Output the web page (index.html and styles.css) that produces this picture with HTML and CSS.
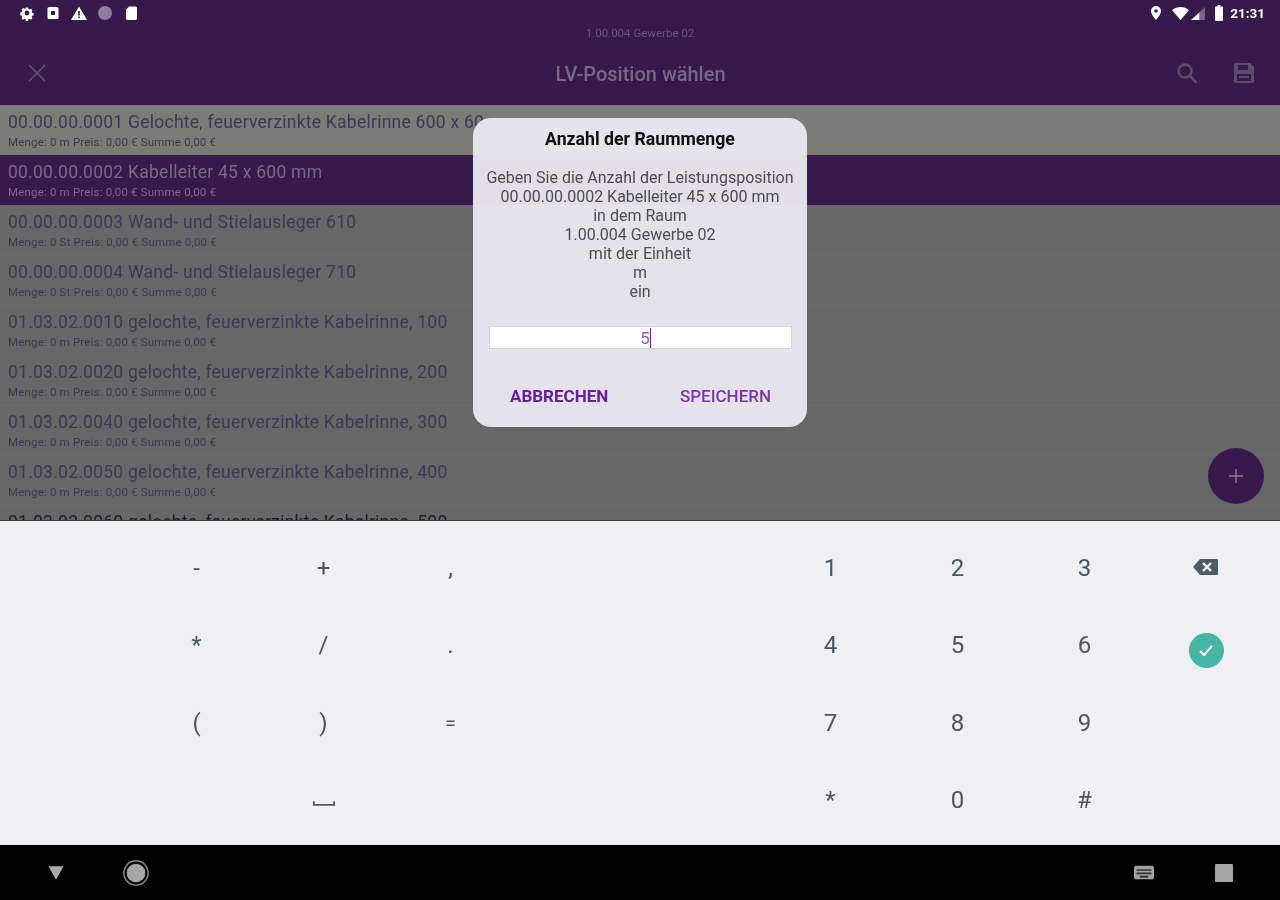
FILE: index.html
```html
<!DOCTYPE html>
<html lang="de">
<head>
<meta charset="utf-8">
<title>LV-Position wählen</title>
<link rel="stylesheet" href="styles.css">
</head>
<body>
<div class="app">
  <header class="header">
    <div class="status">
      <div class="status-left">
        <svg class="si" viewBox="0 0 16 16"><path fill="#fff" d="M6.6 1h2.8l.4 2 1.3.6 1.8-1 2 2-1.1 1.7.6 1.4 2 .4v2.8l-2 .4-.6 1.3 1.1 1.8-2 2-1.8-1.1-1.3.6-.4 2H6.6l-.4-2-1.3-.6-1.8 1.1-2-2 1.1-1.8-.6-1.3-2-.4V7.1l2-.4.6-1.4-1.1-1.7 2-2 1.8 1 1.3-.6z" transform="translate(1.6 1.6) scale(.8)"/><circle cx="8" cy="8" r="2.4" fill="#371a4b"/></svg>
        <svg class="si" viewBox="0 0 16 16"><rect x="2.500" y="2" width="11" height="12" rx="1.500" fill="#fff"/><rect x="6" y="6" width="4" height="4" fill="#371a4b"/></svg>
        <svg class="si" viewBox="0 0 16 16"><path fill="#fff" d="M8 1.500 16 15H0z"/><rect x="7.200" y="6" width="1.600" height="4.500" fill="#371a4b"/><rect x="7.200" y="11.500" width="1.600" height="1.600" fill="#371a4b"/></svg>
        <svg class="si" viewBox="0 0 16 16"><circle cx="8" cy="8" r="7" fill="#8f7ba3"/></svg>
        <svg class="si" viewBox="0 0 16 16"><path fill="#fff" d="M6 1.500h6.500A1.500 1.500 0 0 1 14 3v10.500a1.500 1.500 0 0 1-1.500 1.500h-8A1.500 1.500 0 0 1 3 13.500V4.500z"/></svg>
      </div>
      <div class="status-right">
        <svg class="si" viewBox="0 0 16 16"><path fill="#fff" fill-rule="evenodd" d="M8 1a5 5 0 0 1 5 5c0 3.500-5 9-5 9S3 9.500 3 6a5 5 0 0 1 5-5zm0 3.200a1.800 1.800 0 1 0 0 3.600 1.800 1.800 0 0 0 0-3.600z"/></svg>
        <svg class="wifi" viewBox="0 0 18 14"><path fill="#fff" d="M0 3.500C5-1 13-1 18 3.500L9 14z"/></svg>
        <svg class="signal" viewBox="0 0 15 14"><path fill="#776688" d="M15 0v14H0z"/><path fill="#fff" d="M9 6v8H0z"/></svg>
        <svg class="batt" viewBox="0 0 10 16"><path fill="#fff" d="M3.500 0h3v1.500H8a1 1 0 0 1 1 1V15a1 1 0 0 1-1 1H2a1 1 0 0 1-1-1V2.500a1 1 0 0 1 1-1h1.500z"/></svg>
        <span class="time">21:31</span>
      </div>
    </div>
    <div class="subtitle">1.00.004 Gewerbe 02</div>
    <div class="toolbar">
      <svg class="tool-icon" viewBox="0 0 24 24"><path fill="none" stroke="#64516f" stroke-width="1.600" d="M4 4l16 16M20 4 4 20"/></svg>
      <h1 class="title">LV-Position wählen</h1>
      <div class="tool-right">
        <svg class="tool-icon" viewBox="0 0 24 24"><path fill="none" stroke="#5f4c6b" stroke-width="2.400" d="M10 3.500a6.500 6.500 0 1 0 0 13 6.500 6.500 0 0 0 0-13zM14.800 14.800l7 7"/></svg>
        <svg class="tool-icon" viewBox="0 0 24 24"><path fill="#5f4c6b" fill-rule="evenodd" d="M3 2h15l4 4v16H2V3a1 1 0 0 1 1-1zm3 2v5h10V4zm0 9a1 1 0 0 0-1 1v6h14v-6a1 1 0 0 0-1-1zm1 2h10v2H7z"/></svg>
      </div>
    </div>
  </header>

  <main class="list">
    <div class="row row-first"><div class="row-main">00.00.00.0001 Gelochte, feuerverzinkte Kabelrinne 600 x 60</div><div class="row-sub">Menge: 0 m Preis: 0,00 € Summe 0,00 €</div></div>
    <div class="row row-selected"><div class="row-main">00.00.00.0002 Kabelleiter 45 x 600 mm</div><div class="row-sub">Menge: 0 m Preis: 0,00 € Summe 0,00 €</div></div>
    <div class="row"><div class="row-main">00.00.00.0003 Wand- und Stielausleger 610</div><div class="row-sub">Menge: 0 St Preis: 0,00 € Summe 0,00 €</div></div>
    <div class="row"><div class="row-main">00.00.00.0004 Wand- und Stielausleger 710</div><div class="row-sub">Menge: 0 St Preis: 0,00 € Summe 0,00 €</div></div>
    <div class="row"><div class="row-main">01.03.02.0010 gelochte, feuerverzinkte Kabelrinne, 100</div><div class="row-sub">Menge: 0 m Preis: 0,00 € Summe 0,00 €</div></div>
    <div class="row"><div class="row-main">01.03.02.0020 gelochte, feuerverzinkte Kabelrinne, 200</div><div class="row-sub">Menge: 0 m Preis: 0,00 € Summe 0,00 €</div></div>
    <div class="row"><div class="row-main">01.03.02.0040 gelochte, feuerverzinkte Kabelrinne, 300</div><div class="row-sub">Menge: 0 m Preis: 0,00 € Summe 0,00 €</div></div>
    <div class="row"><div class="row-main">01.03.02.0050 gelochte, feuerverzinkte Kabelrinne, 400</div><div class="row-sub">Menge: 0 m Preis: 0,00 € Summe 0,00 €</div></div>
    <div class="row"><div class="row-main row-last">01.03.02.0060 gelochte, feuerverzinkte Kabelrinne, 500</div></div>
  </main>

  <section class="keyboard">
    <div class="key key-c1">-</div><div class="key">+</div><div class="key">,</div>
    <div class="key key-c2">1</div><div class="key">2</div><div class="key">3</div>
    <div class="key">
      <svg class="back" viewBox="0 0 26 18"><path fill="#4d5b62" d="M7 1h17a1 1 0 0 1 1 1v14a1 1 0 0 1-1 1H7L0 9z"/><path fill="none" stroke="#eef0f2" stroke-width="2.400" d="m10 5 8 8M18 5l-8 8"/></svg>
    </div>

    <div class="key key-c1">*</div><div class="key">/</div><div class="key">.</div>
    <div class="key key-c2">4</div><div class="key">5</div><div class="key">6</div>
    <div class="key">
      <span class="enter"><svg class="check" viewBox="0 0 20 20"><path fill="none" stroke="#fff" stroke-width="2" d="m4 11 4 4 8-9"/></svg></span>
    </div>

    <div class="key key-c1">(</div><div class="key">)</div><div class="key key-small">=</div>
    <div class="key key-c2">7</div><div class="key">8</div><div class="key">9</div>
    <div class="key"></div>

    <div class="key key-c1"></div>
    <div class="key"><svg class="space" viewBox="0 0 26 8"><path fill="none" stroke="#4d5b62" stroke-width="2" d="M2 1v4h22V1"/></svg></div>
    <div class="key"></div>
    <div class="key key-c2">*</div><div class="key">0</div><div class="key">#</div>
    <div class="key"></div>
  </section>

  <nav class="nav">
    <div class="nav-group">
      <svg class="nav-icon" viewBox="0 0 24 24"><path fill="#aaa" d="M2 3h20L12 21z"/></svg>
      <svg class="nav-icon nav-home" viewBox="0 0 30 30"><circle cx="15" cy="15" r="13" fill="none" stroke="#888" stroke-width="1.600"/><circle cx="15" cy="15" r="10" fill="#a6a6a6"/></svg>
    </div>
    <div class="nav-group">
      <svg class="nav-icon nav-kbd" viewBox="0 0 24 18"><rect x="0" y="1" width="24" height="16" rx="2" fill="#a0a0a0"/><path fill="none" stroke="#333" stroke-width="2" d="M3 6h18M3 10h18"/><rect x="7" y="13" width="10" height="2" fill="#222"/></svg>
      <svg class="nav-icon nav-square" viewBox="0 0 18 18"><rect width="18" height="18" rx="1" fill="#a6a6a6"/></svg>
    </div>
  </nav>

  <button class="fab" type="button"><svg class="fab-plus" viewBox="0 0 16 16"><path fill="none" stroke="#8a7a96" stroke-width="1.400" d="M8 1v14M1 8h14"/></svg></button>

  <div class="dialog">
    <h2 class="dialog-title">Anzahl der Raummenge</h2>
    <p class="dialog-body">Geben Sie die Anzahl der Leistungsposition<br>00.00.00.0002 Kabelleiter 45 x 600 mm<br>in dem Raum<br>1.00.004 Gewerbe 02<br>mit der Einheit<br>m<br>ein</p>
    <div class="input"><span class="input-val">5</span><span class="caret"></span></div>
    <div class="actions">
      <span class="action action-cancel">ABBRECHEN</span>
      <span class="action action-save">SPEICHERN</span>
    </div>
  </div>
</div>
</body>
</html>
```
FILE: styles.css
```css
* { box-sizing: border-box; }
html, body { margin: 0; padding: 0; }
body { font-family: Roboto, "Liberation Sans", sans-serif; background: #000; }

.app {
  position: relative;
  width: 1280px;
  height: 900px;
  display: flex;
  flex-direction: column;
  overflow: hidden;
  filter: blur(0.7px);
}

.header { height: 105px; background: #371a4b; flex: none; }

.status {
  height: 26px;
  display: flex;
  justify-content: space-between;
  align-items: center;
  padding: 0 15px 0 19px;
}
.status-left { display: flex; gap: 10px; align-items: center; }
.status-right { display: flex; align-items: center; }
.si { width: 16px; height: 16px; display: block; }
.wifi { width: 17px; height: 13px; margin-left: 8px; }
.signal { width: 14px; height: 13px; margin-left: 2px; }
.batt { width: 10px; height: 16px; margin-left: 9px; }
.time { color: #fff; font-size: 13.500px; font-weight: 700; margin-left: 6px; }

.subtitle {
  height: 15px;
  line-height: 15px;
  text-align: center;
  font-size: 11.500px;
  color: #67537a;
}

.toolbar {
  height: 64px;
  display: flex;
  align-items: center;
  justify-content: space-between;
  padding: 0 24px 0 25px;
  position: relative;
}
.tool-icon { width: 24px; height: 24px; display: block; }
.title {
  position: absolute;
  left: 1px;
  right: 0;
  margin: 1px 0 0;
  text-align: center;
  font-size: 20px;
  font-weight: 500;
  color: #786788;
}
.tool-right { display: flex; gap: 33px; }

.list {
  flex: 1;
  min-height: 0;
  overflow: hidden;
  background: #676767;
}
.row {
  height: 50px;
  padding: 6px 8px 0;
  border-top: 1px solid #6b6b6b;
}
.row-first { background: #7b7b77; border-top-color: #7b7b77; }
.row-selected { background: #371a4b; border-top-color: #371a4b; }
.row-main {
  font-size: 17.500px;
  line-height: 20px;
  color: #3f3850;
  white-space: nowrap;
  letter-spacing: .25px;
}
.row-sub {
  font-size: 11.500px;
  line-height: 14px;
  margin-top: 3px;
  color: #3f3850;
  white-space: nowrap;
  letter-spacing: .18px;
}
.row-selected .row-main, .row-selected .row-sub { color: #7a6889; }
.row-last { color: #1f1a28; }

.keyboard {
  flex: none;
  height: 325px;
  background: #eef0f2;
  border-top: 1px solid #3c3c3c;
  padding: 8px 16px 6px 133px;
  display: grid;
  grid-template-columns: repeat(3, 127px) 253px repeat(3, 127px) 1fr;
  grid-auto-rows: 77.500px;
}
.key {
  display: flex;
  align-items: center;
  justify-content: center;
  font-size: 24px;
  color: #4a565d;
}
.key-small { font-size: 20px; }
.key-c2 { grid-column: 5; }
.key-c1 { grid-column: 1; }
.back { width: 26px; height: 18px; margin-top: -2px; }
.enter {
  width: 35px;
  height: 35px;
  border-radius: 50%;
  background: #45b5a5;
  display: flex;
  align-items: center;
  justify-content: center;
  margin-top: 10px;
}
.check { width: 20px; height: 20px; }
.space { width: 24px; height: 8px; margin-top: 8px; }

.nav {
  flex: none;
  height: 55px;
  background: #000;
  display: flex;
  justify-content: space-between;
  align-items: center;
  padding: 0 44px;
}
.nav-group { display: flex; align-items: center; gap: 54px; }
.nav-group + .nav-group { gap: 56px; }
.nav-icon { width: 24px; height: 18px; display: block; }
.nav-kbd { height: 15px; }
.nav-home { width: 28px; height: 28px; }
.nav-square { width: 18px; height: 18px; margin: 0 3px; }

.fab {
  position: absolute;
  left: 1208px;
  top: 448px;
  width: 56px;
  height: 56px;
  border: 0;
  border-radius: 50%;
  background: #371a4b;
  display: flex;
  align-items: center;
  justify-content: center;
  padding: 0;
}
.fab-plus { width: 16px; height: 16px; }

.dialog {
  position: absolute;
  left: 473px;
  top: 118px;
  width: 334px;
  height: 309px;
  border-radius: 18px;
  background: rgba(232, 230, 238, .97);
  padding: 11px 16px 0 16px;
  display: flex;
  flex-direction: column;
}
.dialog-title {
  margin: 0;
  text-align: center;
  font-size: 17.700px;
  line-height: 21px;
  font-weight: 700;
  color: #111;
}
.dialog-body {
  margin: 18px -8px 0;
  text-align: center;
  font-size: 16px;
  line-height: 19px;
  color: #4e4c50;
}
.input {
  margin-top: 25px;
  height: 23px;
  margin-right: -1px;
  background: #fff;
  border: 1px solid #d6d4da;
  display: flex;
  align-items: center;
  justify-content: center;
  color: #8a5cb8;
  font-size: 17px;
}
.input-val { margin-left: 10px; }
.caret { width: 1px; height: 20px; background: #6a1ba0; }
.actions {
  margin-top: 37px;
  display: flex;
  justify-content: space-between;
  padding: 0 20px 0 21px;
}
.action { font-size: 17px; line-height: 20px; }
.action-cancel { font-weight: 700; color: #6a1ba0; }
.action-save { font-weight: 500; color: #7a35b0; }
```
